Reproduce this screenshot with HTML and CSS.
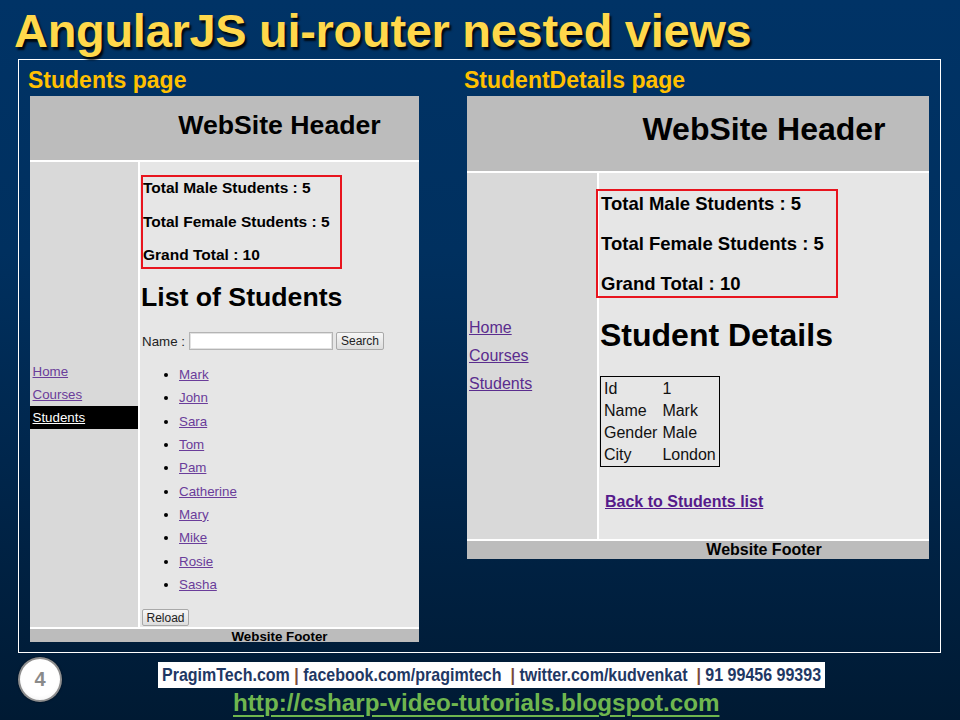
FILE: index.html
```html
<!DOCTYPE html>
<html lang="en">
<head>
<meta charset="utf-8">
<title>AngularJS ui-router nested views</title>
<link rel="stylesheet" href="styles.css">
</head>
<body>
<div class="slide">
  <h1 class="title">AngularJS ui-router nested views</h1>
  <div class="frame">
    <section class="col col-left">
      <div class="label">Students page</div>
      <div class="shot shot-sm">
        <div class="hdr">WebSite Header</div>
        <nav class="nav">
          <a href="#">Home</a>
          <a href="#">Courses</a>
          <a href="#" class="active">Students</a>
        </nav>
        <div class="content">
          <div class="stats">
            <div>Total Male Students : 5</div>
            <div>Total Female Students : 5</div>
            <div>Grand Total : 10</div>
          </div>
          <h2 class="page-h">List of Students</h2>
          <div class="search-row">
            <span>Name :</span>
            <span class="input"></span>
            <span class="btn btn-search">Search</span>
          </div>
          <ul class="students">
            <li><a href="#">Mark</a></li>
            <li><a href="#">John</a></li>
            <li><a href="#">Sara</a></li>
            <li><a href="#">Tom</a></li>
            <li><a href="#">Pam</a></li>
            <li><a href="#">Catherine</a></li>
            <li><a href="#">Mary</a></li>
            <li><a href="#">Mike</a></li>
            <li><a href="#">Rosie</a></li>
            <li><a href="#">Sasha</a></li>
          </ul>
          <span class="btn btn-reload">Reload</span>
        </div>
        <div class="ftr">Website Footer</div>
      </div>
    </section>
    <section class="col col-right">
      <div class="label">StudentDetails page</div>
      <div class="shot shot-lg">
        <div class="hdr">WebSite Header</div>
        <nav class="nav">
          <a href="#">Home</a>
          <a href="#">Courses</a>
          <a href="#">Students</a>
        </nav>
        <div class="content">
          <div class="stats">
            <div>Total Male Students : 5</div>
            <div>Total Female Students : 5</div>
            <div>Grand Total : 10</div>
          </div>
          <h2 class="page-h">Student Details</h2>
          <div class="details">
            <span>Id</span><span>1</span>
            <span>Name</span><span>Mark</span>
            <span>Gender</span><span>Male</span>
            <span>City</span><span>London</span>
          </div>
          <a href="#" class="back">Back to Students list</a>
        </div>
        <div class="ftr">Website Footer</div>
      </div>
    </section>
  </div>
  <div class="bottom">
    <div class="badge">4</div>
    <div class="links">
      <div class="info"><span class="info-text">PragimTech.com <span class="pipe">|</span> facebook.com/pragimtech  <span class="pipe">|</span> twitter.com/kudvenkat  <span class="pipe">|</span> 91 99456 99393</span></div>
      <a href="#" class="url">http://csharp-video-tutorials.blogspot.com</a>
    </div>
  </div>
</div>
</body>
</html>
```
FILE: styles.css
```css
html, body {
  margin: 0;
  padding: 0;
}
body {
  width: 960px;
  height: 720px;
  overflow: hidden;
  background: #001a33;
}
.slide {
  width: 960px;
  height: 720px;
  overflow: hidden;
  background: linear-gradient(to bottom, #003366 0%, #00305f 35%, #002448 70%, #001a33 100%);
  font-family: "Liberation Sans", Arial, sans-serif;
}
.title {
  box-sizing: border-box;
  height: 59px;
  margin: 0;
  padding: 4px 0 0 14px;
  font-size: 47px;
  line-height: 54px;
  font-weight: bold;
  letter-spacing: -0.3px;
  color: #ffd84b;
  text-shadow: 2px 3px 2px rgba(0, 0, 0, 0.85);
  white-space: nowrap;
}
.frame {
  box-sizing: border-box;
  margin-left: 18px;
  width: 923px;
  height: 594px;
  border: 1px solid #ffffff;
  padding-left: 9px;
  display: flex;
}
.col-left {
  width: 436px;
  flex: none;
}
.col-right {
  flex: 1;
}
.label {
  margin-top: 7px;
  height: 26px;
  line-height: 26px;
  font-size: 23px;
  font-weight: bold;
  color: #ffc000;
  white-space: nowrap;
}
.shot {
  display: grid;
  background: #ffffff;
  gap: 2px;
  margin-top: 3px;
  color: #000;
}
.shot a {
  text-decoration: underline;
}
.hdr {
  grid-column: 1 / -1;
  background: #bcbcbc;
  display: flex;
  align-items: center;
  justify-content: center;
  font-weight: bold;
  white-space: nowrap;
}
.nav {
  background: #d9d9d9;
  display: flex;
  flex-direction: column;
  justify-content: center;
}
.nav a {
  display: block;
  white-space: nowrap;
}
.nav a.active {
  background: #000;
  color: #fff;
}
.content {
  background: #e6e6e6;
  display: flex;
  flex-direction: column;
  align-items: flex-start;
}
.stats {
  box-sizing: border-box;
  border: 2px solid #e8141e;
  display: flex;
  flex-direction: column;
  font-weight: bold;
  white-space: nowrap;
}
.page-h {
  margin: 0;
  font-weight: bold;
  white-space: nowrap;
}
.ftr {
  grid-column: 1 / -1;
  background: #bcbcbc;
  text-align: center;
  font-weight: bold;
  overflow: hidden;
  white-space: nowrap;
}

/* small (left) screenshot */
.shot-sm {
  margin-left: 2px;
  width: 389px;
  height: 546px;
  grid-template-columns: 108px 279px;
  grid-template-rows: 64px 465px 13px;
  font-size: 13.33px;
}
.shot-sm .hdr {
  padding-left: 110px;
  padding-bottom: 5px;
  font-size: 26.67px;
}
.shot-sm .nav a {
  line-height: 23.33px;
  padding-left: 2.5px;
  color: #6a3d9a;
}
.shot-sm .nav a.active {
  color: #fff;
}
.shot-sm .content {
  padding-left: 1px;
}
.shot-sm .stats {
  margin-top: 13px;
  width: 201px;
  padding: 2px 0 3px 0;
  gap: 15.5px;
  font-size: 15.5px;
  line-height: 18px;
}
.shot-sm .page-h {
  margin-top: 13px;
  font-size: 26.67px;
  line-height: 31px;
}
.search-row {
  margin-top: 19px;
  height: 18px;
  display: flex;
  align-items: center;
  padding-left: 1px;
  color: #222;
}
.input {
  box-sizing: border-box;
  margin-left: 4px;
  width: 144px;
  height: 18px;
  background: #fff;
  border: 1px solid #b4b4b4;
  box-shadow: inset 0 0 0 1px #e2e2e2;
}
.btn {
  box-sizing: border-box;
  display: flex;
  align-items: center;
  justify-content: center;
  background: linear-gradient(to bottom, #f7f7f7, #dddddd);
  border: 1px solid #a9a9a9;
  border-radius: 2px;
  font-size: 12px;
  color: #222;
}
.btn-search {
  margin-left: 3px;
  width: 48px;
  height: 18px;
}
.students {
  margin: 13px 0 0 0;
  padding-left: 38px;
  line-height: 23.33px;
}
.students a {
  color: #6a3d9a;
}
.btn-reload {
  margin-top: 13px;
  margin-left: 1px;
  width: 47px;
  height: 17px;
}
.shot-sm .ftr {
  padding-left: 110px;
  font-size: 13.33px;
  line-height: 15px;
}

/* large (right) screenshot */
.shot-lg {
  margin-left: 3px;
  width: 462px;
  height: 463px;
  grid-template-columns: 130px 330px;
  grid-template-rows: 75px 366px 18px;
  font-size: 16px;
}
.shot-lg .hdr {
  padding-left: 132px;
  padding-bottom: 9px;
  font-size: 32px;
}
.shot-lg .nav a {
  line-height: 28px;
  padding-left: 2px;
  color: #5a2d8e;
}
.shot-lg .stats {
  margin-top: 16px;
  margin-left: -3px;
  width: 242px;
  padding: 2px 0 1px 3px;
  gap: 18px;
  font-size: 18.5px;
  line-height: 22px;
}
.shot-lg .page-h {
  margin-top: 19px;
  margin-left: 1px;
  font-size: 32px;
  line-height: 37px;
}
.details {
  margin-top: 22px;
  margin-left: 1px;
  border: 1px solid #000;
  padding: 1px 3px 0 3px;
  display: grid;
  grid-template-columns: auto auto;
  column-gap: 5px;
  line-height: 22px;
  color: #111;
}
.back {
  margin-top: 26px;
  margin-left: 6px;
  font-weight: bold;
  line-height: 18px;
  color: #551a8b;
}
.shot-lg .ftr {
  padding-left: 132px;
  font-size: 16px;
  line-height: 18px;
}

/* bottom strip */
.bottom {
  display: flex;
  align-items: flex-start;
  padding: 4px 0 0 18px;
}
.badge {
  box-sizing: border-box;
  width: 44px;
  height: 45px;
  border-radius: 50%;
  border: 2px solid #8e8e8e;
  background: radial-gradient(circle at 50% 45%, #ffffff 60%, #e8e8e8 100%);
  box-shadow: 0 0 2px rgba(0, 0, 0, 0.6);
  display: flex;
  align-items: center;
  justify-content: center;
  font-size: 20px;
  font-weight: bold;
  color: #8a8a8a;
}
.links {
  margin-left: 96px;
  display: flex;
  flex-direction: column;
  align-items: flex-start;
}
.info {
  box-sizing: border-box;
  margin-top: 5px;
  width: 667px;
  height: 26px;
  padding-left: 4px;
  background: #ffffff;
  font-size: 17.7px;
  line-height: 26px;
  font-weight: bold;
  color: #1f3864;
  white-space: pre;
  overflow: hidden;
}
.info-text {
  display: inline-block;
  transform: scaleX(0.905);
  transform-origin: 0 50%;
}
.pipe {
  color: #7a4a3a;
}
.url {
  margin-top: 2px;
  margin-left: 75px;
  font-size: 24.2px;
  line-height: 26px;
  font-weight: bold;
  color: #6fb64f;
  text-decoration: underline;
  text-decoration-thickness: 2px;
  text-underline-offset: 4px;
  white-space: nowrap;
}
```
